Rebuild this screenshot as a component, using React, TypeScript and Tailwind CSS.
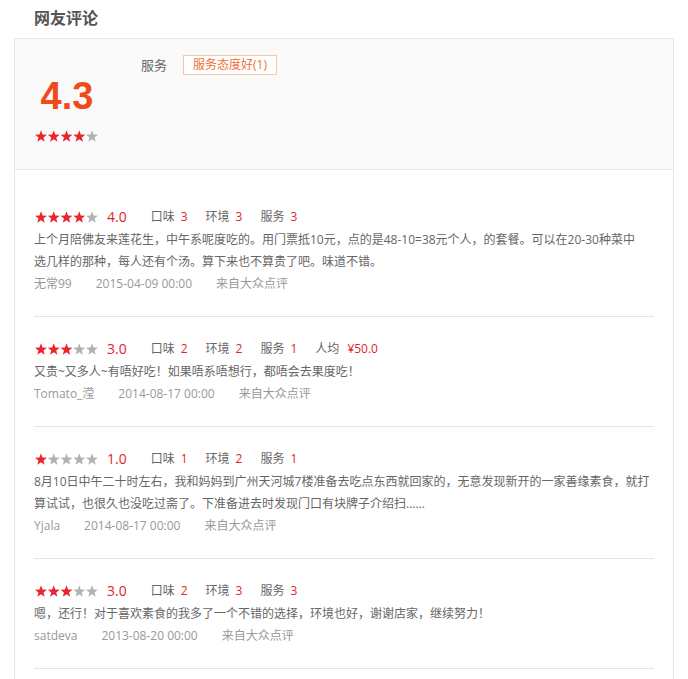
import React from "react";

const FONT = '"Open Sans","Noto Sans CJK SC",sans-serif';

const STAR =
  "6,0.3 7.55,4.5 11.95,4.65 8.5,7.4 9.7,11.7 6,9.25 2.3,11.7 3.5,7.4 0.05,4.65 4.45,4.5";

function Stars({ n }: { n: number }) {
  return (
    <svg width="63" height="12" viewBox="0 0 63 12" className="block shrink-0">
      {[0, 1, 2, 3, 4].map((i) => (
        <polygon
          key={i}
          points={STAR}
          transform={`translate(${i * 12.75} 0)`}
          fill={i < n ? "#e8262d" : "#b2b2b2"}
        />
      ))}
    </svg>
  );
}

type Review = {
  stars: number;
  score: string;
  items: [string, string][];
  lines: string[];
  user: string;
  date: string;
};

const reviews: Review[] = [
  {
    stars: 4,
    score: "4.0",
    items: [
      ["口味", "3"],
      ["环境", "3"],
      ["服务", "3"],
    ],
    lines: [
      "上个月陪佛友来莲花生，中午系呢度吃的。用门票抵10元，点的是48-10=38元个人，的套餐。可以在20-30种菜中",
      "选几样的那种，每人还有个汤。算下来也不算贵了吧。味道不错。",
    ],
    user: "无常99",
    date: "2015-04-09 00:00",
  },
  {
    stars: 3,
    score: "3.0",
    items: [
      ["口味", "2"],
      ["环境", "2"],
      ["服务", "1"],
      ["人均", "¥50.0"],
    ],
    lines: ["又贵~又多人~有唔好吃！如果唔系唔想行，都唔会去果度吃！"],
    user: "Tomato_滢",
    date: "2014-08-17 00:00",
  },
  {
    stars: 1,
    score: "1.0",
    items: [
      ["口味", "1"],
      ["环境", "2"],
      ["服务", "1"],
    ],
    lines: [
      "8月10日中午二十时左右，我和妈妈到广州天河城7楼准备去吃点东西就回家的，无意发现新开的一家善缘素食，就打",
      "算试试，也很久也没吃过斋了。下准备进去时发现门口有块牌子介绍扫......",
    ],
    user: "Yjala",
    date: "2014-08-17 00:00",
  },
  {
    stars: 3,
    score: "3.0",
    items: [
      ["口味", "2"],
      ["环境", "3"],
      ["服务", "3"],
    ],
    lines: ["嗯，还行！对于喜欢素食的我多了一个不错的选择，环境也好，谢谢店家，继续努力！"],
    user: "satdeva",
    date: "2013-08-20 00:00",
  },
];

function ReviewItem({ r }: { r: Review }) {
  return (
    <div className="pt-[20px] pb-[21px] border-b border-[#e6e6e6]">
      <div className="flex items-center h-[24px]">
        <div className="pl-[1px]">
          <Stars n={r.stars} />
        </div>
        <span className="ml-[9px] text-[14px] leading-[24px] text-[#e3242b]">{r.score}</span>
        <div className="flex items-center ml-[24px] text-[12px] leading-[24px]">
          {r.items.map(([k, v], i) => (
            <span key={i} className="mr-[18px] flex">
              <span className="text-[#666]">{k}</span>
              <span className={`text-[#e3242b] ${v.startsWith("¥") ? "ml-[8px]" : "ml-[6px]"}`}>{v}</span>
            </span>
          ))}
        </div>
      </div>
      <div className="text-[12px] leading-[22px] text-[#666] whitespace-nowrap">
        {r.lines.map((l, i) => (
          <div key={i}>{l}</div>
        ))}
      </div>
      <div className="flex text-[12px] leading-[22px] text-[#999] whitespace-nowrap">
        <span className="mr-[24px]">{r.user}</span>
        <span className="mr-[24px]">{r.date}</span>
        <span>来自大众点评</span>
      </div>
    </div>
  );
}

export default function App() {
  return (
    <div className="w-[688px] min-h-[679px] bg-white px-[14px]" style={{ fontFamily: FONT }}>
      <div className="h-[38px] pt-[8px] pl-[20px] text-[16px] leading-[20px] font-bold text-[#555]">
        网友评论
      </div>
      <div className="w-[660px] border border-[#e6e6e6] border-b-0 min-h-[641px]">
        <div className="h-[131px] bg-[#fafafa] border-b border-[#e6e6e6] flex items-start">
          <div className="ml-[20px] w-[64px] pt-[38px] flex flex-col items-center">
            <div
              className="text-[38px] leading-[38px] font-bold text-[#ef4a1b]"
              style={{ fontFamily: '"Liberation Sans",Arial,sans-serif' }}
            >
              4.3
            </div>
            <div className="mt-[15px] self-start">
              <Stars n={4} />
            </div>
          </div>
          <div className="ml-[42px] pt-[16px] flex items-center">
            <span className="text-[13px] text-[#666] leading-[20px]">服务</span>
            <span className="ml-[16px] h-[20px] px-[9px] border border-[#f5c8aa] bg-white text-[12px] leading-[18px] text-[#f07136]">
              服务态度好(1)
            </span>
          </div>
        </div>
        <div className="pt-[15px] mx-[19px]">
          {reviews.map((r, i) => (
            <ReviewItem key={i} r={r} />
          ))}
        </div>
      </div>
    </div>
  );
}
